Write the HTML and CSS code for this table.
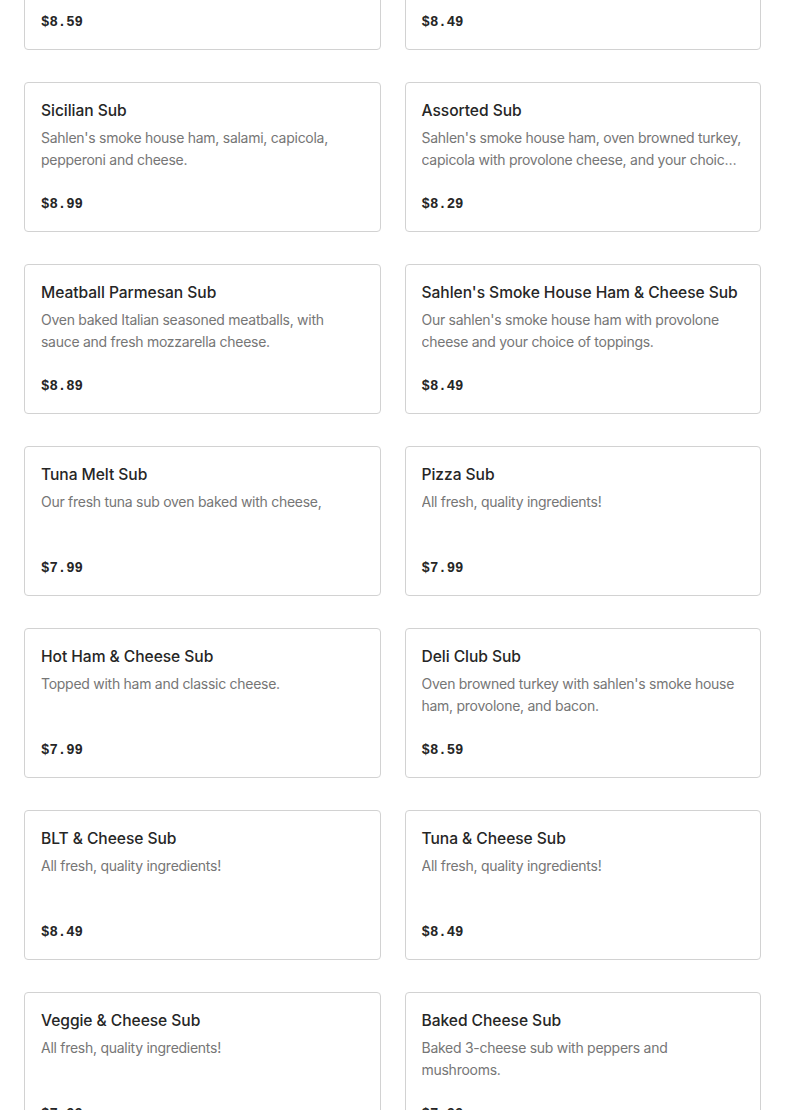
FILE: index.html
```html
<!DOCTYPE html>
<html lang="en">
<head>
<meta charset="utf-8">
<title>Subs</title>
<link rel="stylesheet" href="styles.css">
</head>
<body>
<main class="menu">
  <div class="card"><h3 class="name">Italian Sub</h3><p class="desc">Sahlen's smoke house ham, salami, capicola and provolone cheese.</p><div class="price">$8.59</div></div>
  <div class="card"><h3 class="name">Turkey Sub</h3><p class="desc">Oven browned turkey with provolone cheese and your choice of toppings.</p><div class="price">$8.49</div></div>

  <div class="card"><h3 class="name">Sicilian Sub</h3><p class="desc">Sahlen's smoke house ham, salami, capicola, pepperoni and cheese.</p><div class="price">$8.99</div></div>
  <div class="card"><h3 class="name">Assorted Sub</h3><p class="desc">Sahlen's smoke house ham, oven browned turkey, capicola with provolone cheese, and your choice of toppings.</p><div class="price">$8.29</div></div>

  <div class="card"><h3 class="name">Meatball Parmesan Sub</h3><p class="desc">Oven baked Italian seasoned meatballs, with sauce and fresh mozzarella cheese.</p><div class="price">$8.89</div></div>
  <div class="card"><h3 class="name">Sahlen's Smoke House Ham &amp; Cheese Sub</h3><p class="desc">Our sahlen's smoke house ham with provolone cheese and your choice of toppings.</p><div class="price">$8.49</div></div>

  <div class="card"><h3 class="name">Tuna Melt Sub</h3><p class="desc">Our fresh tuna sub oven baked with cheese,</p><div class="price">$7.99</div></div>
  <div class="card"><h3 class="name">Pizza Sub</h3><p class="desc">All fresh, quality ingredients!</p><div class="price">$7.99</div></div>

  <div class="card"><h3 class="name">Hot Ham &amp; Cheese Sub</h3><p class="desc">Topped with ham and classic cheese.</p><div class="price">$7.99</div></div>
  <div class="card"><h3 class="name">Deli Club Sub</h3><p class="desc">Oven browned turkey with sahlen's smoke house ham, provolone, and bacon.</p><div class="price">$8.59</div></div>

  <div class="card"><h3 class="name">BLT &amp; Cheese Sub</h3><p class="desc">All fresh, quality ingredients!</p><div class="price">$8.49</div></div>
  <div class="card"><h3 class="name">Tuna &amp; Cheese Sub</h3><p class="desc">All fresh, quality ingredients!</p><div class="price">$8.49</div></div>

  <div class="card"><h3 class="name">Veggie &amp; Cheese Sub</h3><p class="desc">All fresh, quality ingredients!</p><div class="price">$7.99</div></div>
  <div class="card"><h3 class="name">Baked Cheese Sub</h3><p class="desc">Baked 3-cheese sub with peppers and mushrooms.</p><div class="price">$7.99</div></div>
</main>
</body>
</html>
```
FILE: styles.css
```css
html, body {
  margin: 0;
  padding: 0;
  background: #ffffff;
}

body {
  font-family: Inter, "Noto Sans", "Liberation Sans", sans-serif;
  color: #2a2a2a;
}

.menu {
  display: grid;
  grid-template-columns: minmax(0, 1fr) minmax(0, 1fr);
  column-gap: 24px;
  row-gap: 32px;
  padding: 0 24px 40px;
  margin-top: -100px;
}

.card {
  border: 1px solid #d2d2d2;
  border-radius: 4px;
  padding: 16px;
  height: 150px;
  box-sizing: border-box;
  display: flex;
  flex-direction: column;
  min-width: 0;
}

.name {
  margin: 0;
  font-size: 15.6px;
  line-height: 24px;
  font-weight: 500;
  color: #262626;
  white-space: nowrap;
  letter-spacing: -0.05px;
}

.desc {
  margin: 4px 0 0;
  font-size: 14px;
  line-height: 22px;
  height: 44px;
  color: #767676;
  letter-spacing: -0.27px;
  overflow: hidden;
  display: -webkit-box;
  -webkit-line-clamp: 2;
  -webkit-box-orient: vertical;
}

.price {
  margin-top: 22px;
  font-family: "Liberation Mono", "DejaVu Sans Mono", monospace;
  font-weight: 700;
  font-size: 14px;
  line-height: 22px;
  color: #262626;
}
```
